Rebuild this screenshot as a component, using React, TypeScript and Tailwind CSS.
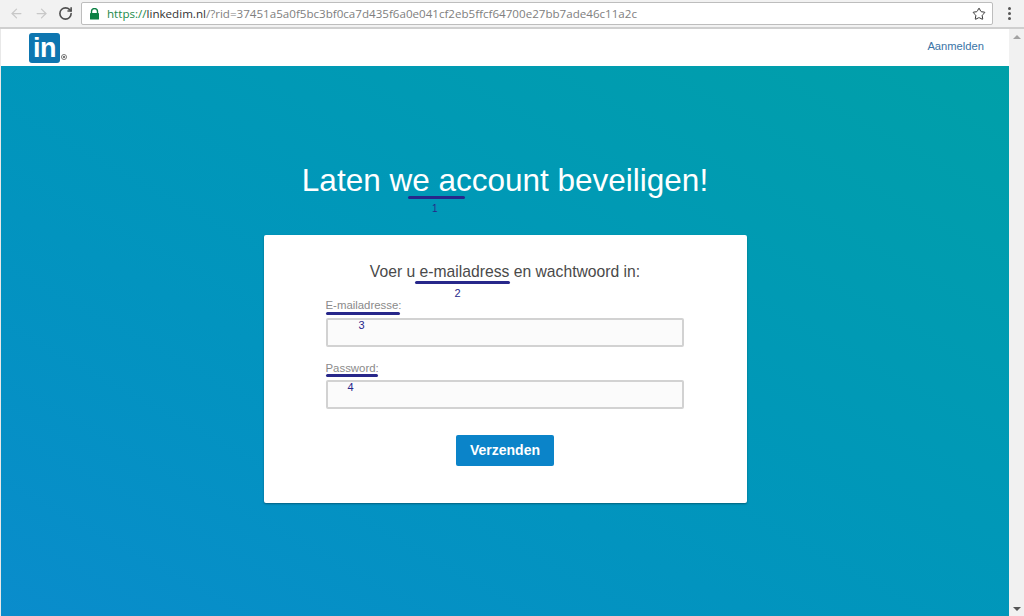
import { ArrowLeft, ArrowRight, RotateCw, Star } from "lucide-react";

const FONT = "font-['Liberation_Sans',Arial,sans-serif]";

function Toolbar() {
  return (
    <div className="flex h-[29px] items-start border-b-2 border-[#cfcfcf] bg-[#f2f2f2]">
      <div className="flex h-[27px] w-[81px] items-center pl-[9px]">
        <ArrowLeft size={15} strokeWidth={2} className="text-[#c8c8c8]" />
        <ArrowRight size={15} strokeWidth={2} className="ml-[10px] text-[#c8c8c8]" />
        <RotateCw size={15} strokeWidth={2.6} className="ml-[9px] text-[#505050]" />
      </div>
      <div className="mt-[2px] flex h-[23px] w-[912px] items-center rounded-[2px] border border-[#bdbdbd] bg-white pl-[7px] pr-[6px]">
        <svg width="11" height="12" viewBox="0 0 11 12" className="shrink-0">
          <path d="M2.5 5V3.6a3 3 0 0 1 6 0V5" fill="none" stroke="#0b8043" strokeWidth="1.4" />
          <rect x="1" y="5" width="9" height="6.5" rx="0.6" fill="#0b8043" />
        </svg>
        <div className="ml-[7px] flex-1 whitespace-nowrap font-['Open_Sans',sans-serif] text-[11.6px] text-[#808080]">
          <span className="text-[#1c8a4a]">https://</span>
          <span className="text-[#333333]">linkedim.nl</span>
          /?rid=37451a5a0f5bc3bf0ca7d435f6a0e041cf2eb5ffcf64700e27bb7ade46c11a2c
        </div>
        <Star size={14} strokeWidth={1.7} className="text-[#333333]" />
      </div>
      <div className="flex h-[27px] flex-1 flex-col items-center justify-center gap-[2px] pl-[1px]">
        <span className="size-[3px] rounded-full bg-[#555555]" />
        <span className="size-[3px] rounded-full bg-[#555555]" />
        <span className="size-[3px] rounded-full bg-[#555555]" />
      </div>
    </div>
  );
}

function Logo() {
  return (
    <div className="flex items-end">
      <div className="flex h-[30px] w-[31px] items-center justify-center rounded-[3px] bg-[#0e76b0]">
        <span className={`${FONT} text-[27px] font-bold leading-[30px] tracking-[-0.5px] text-white`}>in</span>
      </div>
      <span className="mb-[3px] ml-[1px] flex size-[6px] items-center justify-center rounded-full border border-[#777777]">
        <span className="size-[2px] bg-[#777777]" />
      </span>
    </div>
  );
}

function Mark({ className }: { className: string }) {
  return <span className={`absolute h-[3px] rounded-full bg-[#27278a] ${className}`} />;
}

function Num({ className, children }: { className: string; children: string }) {
  return <span className={`absolute text-[#27278a] leading-none ${className}`}>{children}</span>;
}

export default function App() {
  return (
    <div className={`${FONT} flex h-[616px] w-[1024px] flex-col overflow-hidden bg-white`}>
      <Toolbar />
      <div className="flex flex-1">
        <div className="flex flex-1 flex-col border-l border-[#e8e8e8]">
          <header className="flex h-[37px] items-center justify-between pl-[28px] pr-[25px] pt-[1px]">
            <Logo />
            <a className="pb-[4px] text-[11.2px] text-[#3a74a6]">Aanmelden</a>
          </header>
          <main className="relative flex flex-1 flex-col items-center bg-linear-to-tr from-[#0a8ccc] to-[#00a0a8] pt-[93px]">
            <h1 className="text-[31.5px] leading-[42px] text-white">Laten we account beveiligen!</h1>
            <Mark className="left-[407px] top-[130px] w-[57px]" />
            <Num className="left-[431px] top-[138px] text-[10px]">1</Num>

            <div className="relative mt-[34px] flex h-[268px] w-[483px] flex-col rounded-[2px] bg-white px-[62px] pt-[27px] shadow-[0_1px_2px_rgba(0,0,0,0.35)]">
              <h2 className="text-center text-[15.7px] leading-[20px] text-[#4a4a4a]">
                Voer u e-mailadress en wachtwoord in:
              </h2>
              <label className="mt-[15px] text-[11.4px] leading-[16px] text-[#8a8a8a]">E-mailadresse:</label>
              <input className="mt-[5px] h-[29px] w-[358px] rounded-[2px] border-2 border-[#d2d2d2] bg-[#fbfbfb]" />
              <label className="mt-[13px] text-[11.4px] leading-[16px] text-[#8a8a8a]">Password:</label>
              <input className="mt-[4px] h-[29px] w-[358px] rounded-[2px] border-2 border-[#d2d2d2] bg-[#fbfbfb]" />
              <button className="mx-auto mt-[26px] h-[31px] w-[98px] rounded-[2px] bg-[#0b84c9] text-[14px] font-bold text-white">
                Verzenden
              </button>

              <Mark className="left-[151px] top-[46px] w-[95px]" />
              <Num className="left-[191px] top-[53px] text-[11px]">2</Num>
              <Mark className="left-[62px] top-[77px] w-[74px]" />
              <Num className="left-[95px] top-[85px] text-[11px]">3</Num>
              <Mark className="left-[62px] top-[139px] w-[52px]" />
              <Num className="left-[84px] top-[147px] text-[11px]">4</Num>
            </div>
          </main>
        </div>
        <div className="flex w-[15px] flex-col items-center justify-between bg-[#f1f1f1] pb-[5px] pt-[6px]">
          <span className="border-x-[4px] border-b-[4px] border-x-transparent border-b-[#a3a3a3]" />
          <span className="border-x-[4px] border-t-[4px] border-x-transparent border-t-[#555555]" />
        </div>
      </div>
    </div>
  );
}
